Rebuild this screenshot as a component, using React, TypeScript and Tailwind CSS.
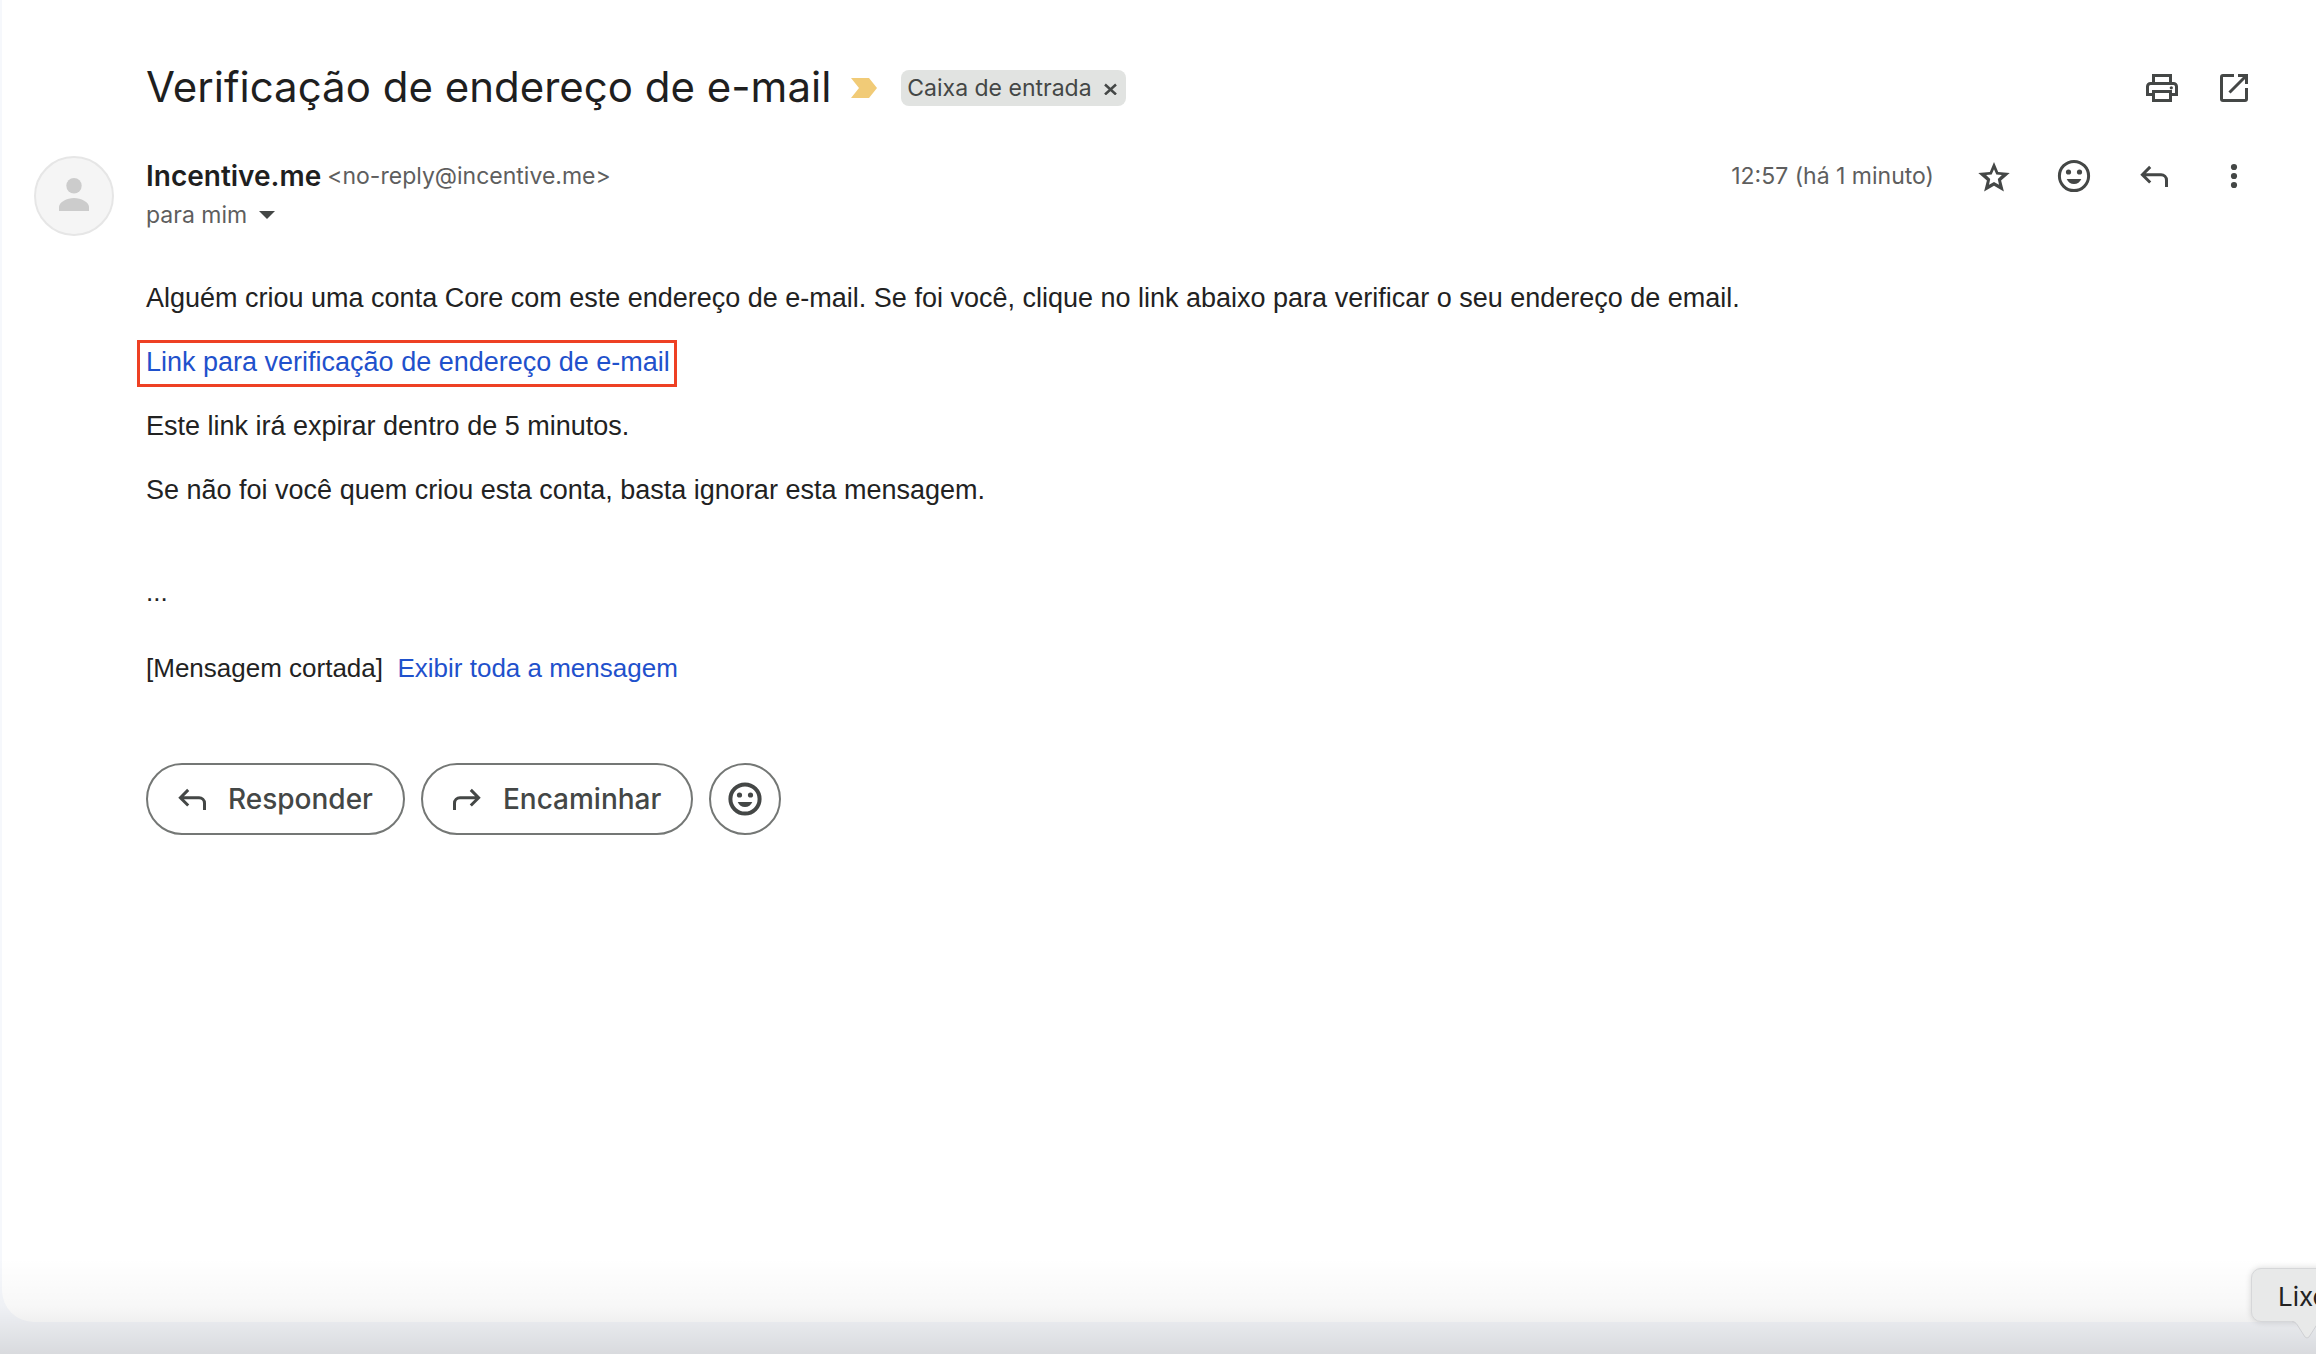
import type { ReactNode } from 'react';

function Icon({ children, strokeWidth = 3 }: { children: ReactNode; strokeWidth?: number }) {
  return (
    <svg
      className="size-10 shrink-0"
      viewBox="0 0 40 40"
      fill="none"
      stroke="currentColor"
      strokeWidth={strokeWidth}
      aria-hidden="true"
    >
      {children}
    </svg>
  );
}

function PrintIcon() {
  return (
    <Icon>
      <path d="M11.5 15.5v-8h17v8" />
      <path d="M10 26.5H5.5v-8a3 3 0 0 1 3-3h23a3 3 0 0 1 3 3v8H30" />
      <path d="M11.5 23.5h17v9h-17z" />
      <circle cx="29.3" cy="19.8" r="1.6" fill="currentColor" stroke="none" />
    </Icon>
  );
}

function OpenInNewIcon() {
  return (
    <Icon>
      <path d="M20 7.5H9A1.5 1.5 0 0 0 7.5 9v22A1.5 1.5 0 0 0 9 32.5h22a1.5 1.5 0 0 0 1.5-1.5V20" />
      <path d="M24 7.5h8.5V16M32 8 15.5 24.5" />
    </Icon>
  );
}

function StarIcon() {
  return (
    <Icon>
      <path
        fill="currentColor"
        stroke="none"
        fillRule="evenodd"
        d="M20 6l4.2 9.9 11.5 1.2-8.6 7.5 2.8 10.9L20 29.8l-9.9 5.7 2.8-10.9-8.6-7.5 11.5-1.2zM20 13.3l-2.3 5.2-5.6.6 4.1 3.9-1.2 5.8 5-2.8 5 2.8-1.2-5.8 4.1-3.9-5.6-.6z"
      />
    </Icon>
  );
}

function SmileIcon({ strokeWidth = 3 }: { strokeWidth?: number }) {
  return (
    <Icon strokeWidth={strokeWidth}>
      <circle cx="20" cy="20" r="14.6" />
      <g fill="currentColor" stroke="none">
        <circle cx="14.5" cy="16" r="2.6" />
        <circle cx="25.5" cy="16" r="2.6" />
        <path d="M12.7 23h14.6c-1.2 3-4 5-7.3 5s-6.1-2-7.3-5z" />
      </g>
    </Icon>
  );
}

function ReplyIcon() {
  return (
    <Icon>
      <path d="M16.2 10.9l-7.8 7.8 7.8 7.8M8.5 18.7H27a5.5 5.5 0 0 1 5.5 5.5V31" />
    </Icon>
  );
}

function ForwardIcon() {
  return (
    <Icon>
      <path d="M23.8 10.9l7.8 7.8-7.8 7.8M31.5 18.7H13a5.5 5.5 0 0 0-5.5 5.5V31" />
    </Icon>
  );
}

function MoreIcon() {
  return (
    <Icon>
      <g fill="currentColor" stroke="none">
        <circle cx="20" cy="11" r="3.1" />
        <circle cx="20" cy="20" r="3.1" />
        <circle cx="20" cy="29" r="3.1" />
      </g>
    </Icon>
  );
}

function IconButton({ label, children }: { label: string; children: ReactNode }) {
  return (
    <button type="button" aria-label={label} className="size-10 cursor-pointer">
      {children}
    </button>
  );
}

function SubjectRow() {
  return (
    <header className="flex h-10 items-center pl-28">
      <h1 className="pb-0.5 text-[42px] leading-10 text-[#1f1f1f]">Verificação de endereço de e-mail</h1>
      <svg className="ml-5 h-5 w-[26px] shrink-0" viewBox="0 0 26 20" fill="#f1cb77" aria-hidden="true">
        <path d="M0 0h18l8 10-8 10H0l8-10z" />
      </svg>
      <div className="ml-6 flex h-9 items-center gap-3 rounded-lg bg-[#e1e3e1] pr-2 pl-1.5 text-[23px] text-[#444746]">
        Caixa de entrada
        <button type="button" aria-label="Remover marcador" className="cursor-pointer">
          <svg className="size-3.5" viewBox="0 0 14 14" fill="none" stroke="currentColor" strokeWidth="2.5">
            <path d="M1 3.500l11 10M12 3.500l-11 10" />
          </svg>
        </button>
      </div>
      <div className="ml-auto flex gap-8 text-[#444746]">
        <IconButton label="Imprimir tudo"><PrintIcon /></IconButton>
        <IconButton label="Em uma nova janela"><OpenInNewIcon /></IconButton>
      </div>
    </header>
  );
}

function SenderRow() {
  return (
    <div className="mt-12 flex">
      <div className="size-20 shrink-0 rounded-full border-2 border-[#e6e6e6] bg-[#f5f5f5]">
        <svg className="size-full" viewBox="0 0 76 76" fill="#cccccc" aria-hidden="true">
          <circle cx="38" cy="27.7" r="7.7" />
          <path d="M23 53v-4c0-5 8-9 15-9s15 4 15 9v4z" />
        </svg>
      </div>
      <div className="ml-8 text-[23px] text-[#5e5e5e]">
        <div className="flex h-10 items-center gap-1.5">
          <span className="text-[28px] font-semibold text-[#1f1f1f]">Incentive.me</span>
          <span>&lt;no-reply@incentive.me&gt;</span>
        </div>
        <button type="button" className="flex h-[38px] cursor-pointer items-center gap-3">
          para mim
          <svg className="h-2 w-4" viewBox="0 0 16 8" fill="#444746" aria-hidden="true">
            <path d="M0 0h16L8 8z" />
          </svg>
        </button>
      </div>
      <div className="ml-auto flex h-10 items-center gap-10 text-[#444746]">
        <time className="text-[23px] text-[#5e5e5e]">12:57 (há 1 minuto)</time>
        <IconButton label="Marcar com estrela"><StarIcon /></IconButton>
        <IconButton label="Adicionar reação"><SmileIcon /></IconButton>
        <IconButton label="Responder"><ReplyIcon /></IconButton>
        <IconButton label="Mais"><MoreIcon /></IconButton>
      </div>
    </div>
  );
}

function MessageBody() {
  return (
    <div className="mt-[46px] ml-28 font-['Liberation_Sans',Arial,sans-serif] text-[26px] leading-8 text-[#222222]">
      <div className="flex flex-col items-start gap-8 text-[27px]">
        <p>
          Alguém criou uma conta Core com este endereço de e-mail. Se foi você, clique no link abaixo para
          verificar o seu endereço de email.
        </p>
        <a
          href="#verificar"
          className="-mt-1.5 -mb-[9px] -ml-[9px] border-3 border-[#ee4023] pt-[3px] pr-1 pb-1.5 pl-1.5 text-[#1f51cc]"
        >
          Link para verificação de endereço de e-mail
        </a>
        <p>Este link irá expirar dentro de 5 minutos.</p>
        <p>Se não foi você quem criou esta conta, basta ignorar esta mensagem.</p>
      </div>
      <p className="mt-[70px]">...</p>
      <p className="mt-11">
        [Mensagem cortada]&nbsp;{' '}
        <a href="#mensagem" className="text-[#1f51cc]">Exibir toda a mensagem</a>
      </p>
    </div>
  );
}

function Actions() {
  return (
    <div className="mt-[79px] ml-28 flex gap-4 text-[28px] font-medium text-[#444746]">
      <button type="button" className="flex h-18 cursor-pointer items-center gap-4 rounded-full border-2 border-[#747775] pr-[30px] pl-6">
        <ReplyIcon />
        Responder
      </button>
      <button type="button" className="flex h-18 cursor-pointer items-center gap-4 rounded-full border-2 border-[#747775] pr-[30px] pl-6">
        <ForwardIcon />
        Encaminhar
      </button>
      <button
        type="button"
        aria-label="Adicionar reação"
        className="flex size-18 cursor-pointer items-center justify-center rounded-full border-2 border-[#747775]"
      >
        <SmileIcon strokeWidth={4} />
      </button>
    </div>
  );
}

// dock label that hangs over the bottom right corner of the window
function DockLabel() {
  return (
    <div className="absolute right-[-45px] bottom-8 h-[54px] w-[110px] rounded-[10px] border border-[#d6d7d9] bg-[#e8e9e9] pl-[26px] text-[26px] leading-[56px] text-[#222222] shadow-[0_0_6px_rgba(0,0,0,0.15)]">
      Lixo
      <svg className="absolute top-[52px] left-10 h-[19px] w-[30px]" viewBox="0 0 30 19" aria-hidden="true">
        <path d="M0 0c3 0 4 2 5 3l8 13q2 2 4 0l8-13c1-1 2-3 5-3z" fill="#e8e9e9" />
        <path d="M0 .7c3 0 4 1.800 5 2.800l8 12.500q2 2 4 0l8-12.500c1-1 2-2.800 5-2.800" fill="none" stroke="#cfd0d3" />
      </svg>
    </div>
  );
}

export default function App() {
  return (
    <div className="relative flex min-h-screen flex-col overflow-hidden bg-[#f6f8fc] pb-8 pl-0.5 font-[Inter,sans-serif]">
      <main className="flex-1 rounded-bl-[32px] bg-white pt-[68px] pr-[62px] pb-8 pl-8">
        <SubjectRow />
        <SenderRow />
        <MessageBody />
        <Actions />
      </main>
      <div className="pointer-events-none absolute inset-x-0 bottom-0 h-24 bg-linear-to-b from-black/0 via-black/3 to-black/12" />
      <DockLabel />
    </div>
  );
}
